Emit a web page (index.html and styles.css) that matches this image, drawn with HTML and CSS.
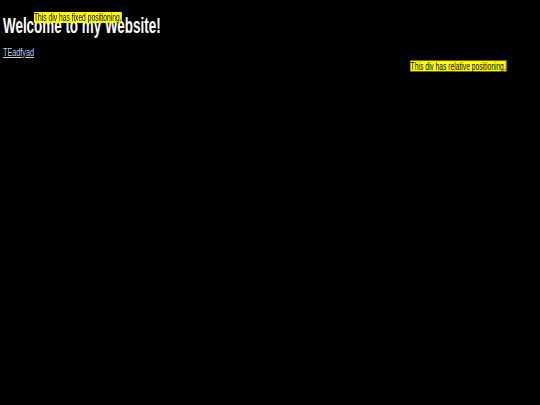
FILE: index.html
```html
<!DOCTYPE html>
<html>
<head>
<meta charset="utf-8">
<link rel="stylesheet" href="styles.css">
</head>
<body>
<h1 class="title">Welcome to my Website!</h1>
<div class="link-row"><a class="link" href="#">TEadfyad</a></div>
<div class="rel-wrap"><div class="relative-box">This div has relative positioning.</div></div>
<div class="fixed-box">This div has fixed positioning.</div>
</body>
</html>
```
FILE: styles.css
```css
html, body {
  background: #000;
}
body {
  margin: 3px;
  font-family: "Liberation Sans", Arial, sans-serif;
  font-size: 11px;
  line-height: 11px;
  color: #fff;
}
.title {
  font-size: 22px;
  font-weight: bold;
  margin: 10px 0 8px 0;
  line-height: 26px;
  transform: scaleX(0.61);
  transform-origin: left center;
  white-space: nowrap;
}
.link-row {
  transform: scaleX(0.66);
  transform-origin: left center;
}
.link {
  color: #d0d0d0;
  font-size: 11px;
}
.rel-wrap {
  margin-top: 2px;
}
.relative-box {
  display: inline-block;
  position: relative;
  left: 407px;
  background: #ff0;
  color: #000;
  font-size: 11px;
  line-height: 10px;
  border: 1px solid #666600;
  white-space: nowrap;
  transform: scaleX(0.61);
  transform-origin: left center;
}
.fixed-box {
  position: fixed;
  top: 12px;
  left: 34px;
  background: #ff0;
  color: #000;
  font-size: 11px;
  line-height: 11px;
  white-space: nowrap;
  transform: scaleX(0.61);
  transform-origin: left center;
}
```
